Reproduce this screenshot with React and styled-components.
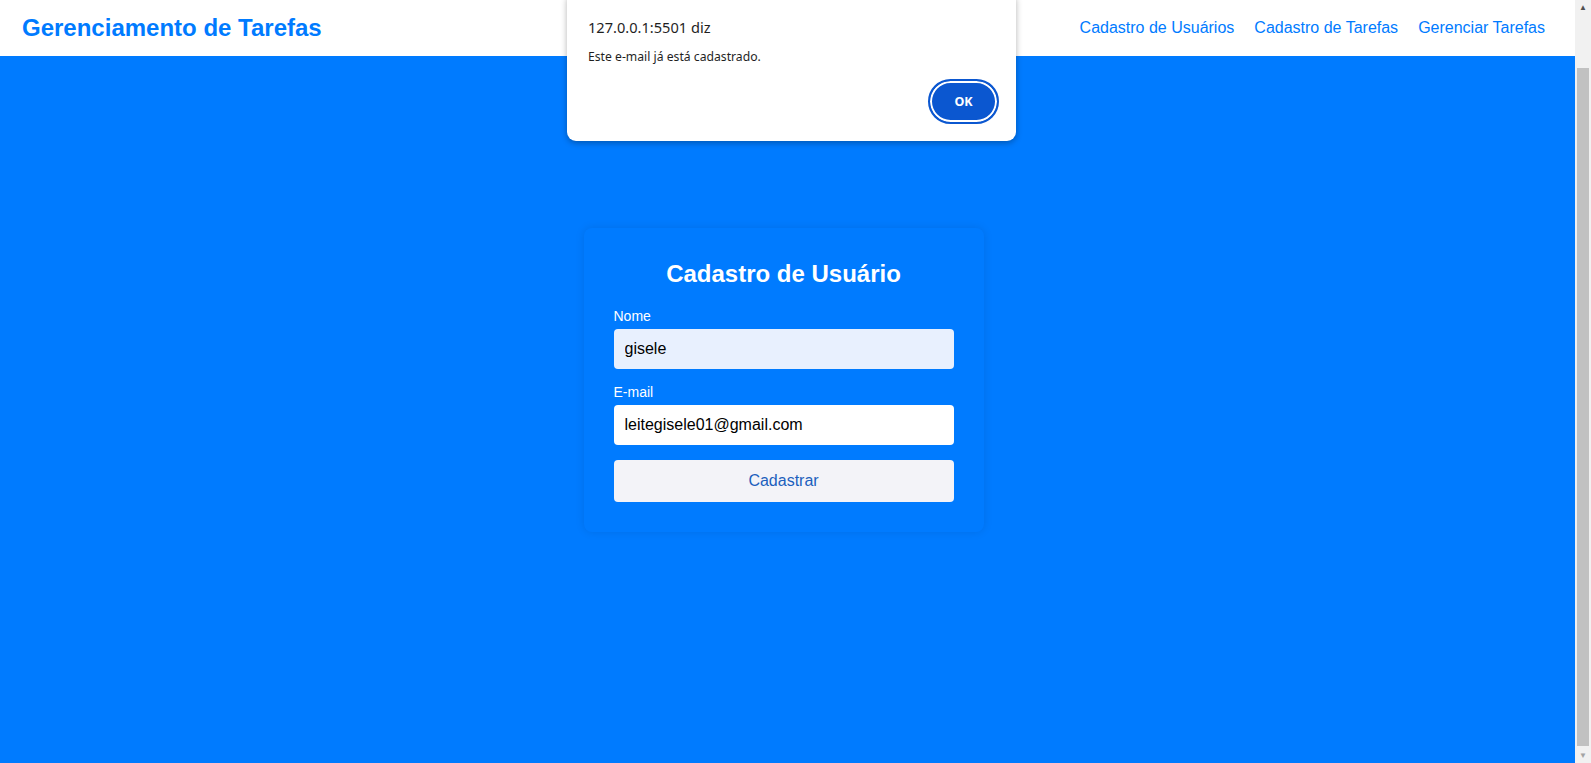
import styled, { createGlobalStyle } from "styled-components";

const GlobalStyle = createGlobalStyle`
  html, body {
    margin: 0;
    padding: 0;
    overflow: hidden;
  }
  body {
    font-family: "Liberation Sans", Arial, sans-serif;
    background-color: #007bff;
  }
`;

const Screen = styled.div`
  display: flex;
  height: 100vh;
`;

const Page = styled.div`
  position: relative;
  flex: 1;
  display: flex;
  flex-direction: column;
`;

const Header = styled.header`
  position: absolute;
  top: 0;
  left: 0;
  right: 0;
  height: 56px;
  background-color: #ffffff;
  display: flex;
  align-items: center;
  justify-content: space-between;
  padding: 0 30px 0 22px;
  box-sizing: border-box;
  z-index: 1;
`;

const Brand = styled.h1`
  margin: 0;
  font-size: 24px;
  font-weight: bold;
  color: #007bff;
`;

const Nav = styled.nav`
  display: flex;
  gap: 20px;
`;

const NavLink = styled.a`
  font-size: 16px;
  color: #007bff;
  text-decoration: none;
  cursor: pointer;
`;

const Main = styled.main`
  flex: 1;
  display: flex;
  align-items: center;
  justify-content: center;
  padding: 0 8px 3px 0;
`;

const Card = styled.div`
  width: 400px;
  box-sizing: border-box;
  padding: 30px;
  border-radius: 8px;
  background-color: #007bff;
  box-shadow: 0 0 10px rgba(0, 0, 0, 0.1);
`;

const Title = styled.h2`
  margin: 2px 0 20px;
  font-size: 24px;
  line-height: 28px;
  text-align: center;
  color: #ffffff;
`;

const Field = styled.div`
  display: flex;
  flex-direction: column;
  margin-bottom: 15px;
`;

const Label = styled.label`
  font-size: 14px;
  line-height: 16px;
  color: #ffffff;
  margin-bottom: 5px;
`;

const Input = styled.input`
  height: 40px;
  box-sizing: border-box;
  border: none;
  border-radius: 4px;
  padding: 0 11px;
  font-family: "Liberation Sans", Arial, sans-serif;
  font-size: 16px;
  color: #000000;
  background-color: ${(props) => (props.$filled ? "#e8f0fe" : "#ffffff")};
  outline: none;
`;

const SubmitButton = styled.button`
  width: 100%;
  height: 42px;
  border: none;
  border-radius: 4px;
  background-color: #f3f3f8;
  color: #1c5fbd;
  font-family: "Liberation Sans", Arial, sans-serif;
  font-size: 16px;
  cursor: pointer;
`;

const Scrollbar = styled.div`
  width: 16px;
  background-color: #f1f1f1;
  display: flex;
  flex-direction: column;
  align-items: center;
`;

const ScrollArrow = styled.div`
  height: 15px;
  display: flex;
  align-items: center;
  justify-content: center;
  color: ${(props) => (props.$dim ? "#a3a3a3" : "#505050")};
  font-size: 8px;
`;

const ScrollTrack = styled.div`
  flex: 1;
  width: 100%;
  display: flex;
  flex-direction: column;
  justify-content: flex-end;
  align-items: center;
  padding-bottom: 2px;
  box-sizing: border-box;
`;

const ScrollThumb = styled.div`
  width: 12px;
  height: 678px;
  background-color: #c1c1c1;
`;

const Dialog = styled.div`
  position: absolute;
  top: -8px;
  left: 567px;
  width: 449px;
  box-sizing: border-box;
  padding: 25px 17px 17px 21px;
  background-color: #ffffff;
  border-radius: 9px;
  box-shadow: 0 2px 6px rgba(0, 0, 0, 0.3);
  font-family: "Noto Sans", "Open Sans", sans-serif;
  color: #1f1f1f;
  z-index: 2;
`;

const DialogTitle = styled.div`
  font-size: 14.6px;
  line-height: 20px;
`;

const DialogMessage = styled.div`
  margin-top: 12px;
  font-size: 12.2px;
  line-height: 16px;
`;

const DialogActions = styled.div`
  display: flex;
  justify-content: flex-end;
  margin-top: 14px;
`;

const OkButton = styled.button`
  width: 71px;
  height: 45px;
  border-radius: 999px;
  border: 2px solid #0b57d0;
  box-shadow: inset 0 0 0 2px #ffffff;
  background-color: #0b57d0;
  color: #ffffff;
  font-family: "Noto Sans", "Open Sans", sans-serif;
  font-weight: bold;
  font-size: 12.5px;
  cursor: pointer;
`;

const App = () => {
  return (
    <>
      <GlobalStyle />
      <Screen>
        <Page>
          <Header>
            <Brand>Gerenciamento de Tarefas</Brand>
            <Nav>
              <NavLink>Cadastro de Usuários</NavLink>
              <NavLink>Cadastro de Tarefas</NavLink>
              <NavLink>Gerenciar Tarefas</NavLink>
            </Nav>
          </Header>
          <Main>
            <Card>
              <Title>Cadastro de Usuário</Title>
              <Field>
                <Label>Nome</Label>
                <Input $filled defaultValue="gisele" />
              </Field>
              <Field>
                <Label>E-mail</Label>
                <Input defaultValue="leitegisele01@gmail.com" />
              </Field>
              <SubmitButton>Cadastrar</SubmitButton>
            </Card>
          </Main>
          <Dialog>
            <DialogTitle>127.0.0.1:5501 diz</DialogTitle>
            <DialogMessage>Este e-mail já está cadastrado.</DialogMessage>
            <DialogActions>
              <OkButton>OK</OkButton>
            </DialogActions>
          </Dialog>
        </Page>
        <Scrollbar>
          <ScrollArrow>▲</ScrollArrow>
          <ScrollTrack>
            <ScrollThumb />
          </ScrollTrack>
          <ScrollArrow $dim>▼</ScrollArrow>
        </Scrollbar>
      </Screen>
    </>
  );
};

export default App;
